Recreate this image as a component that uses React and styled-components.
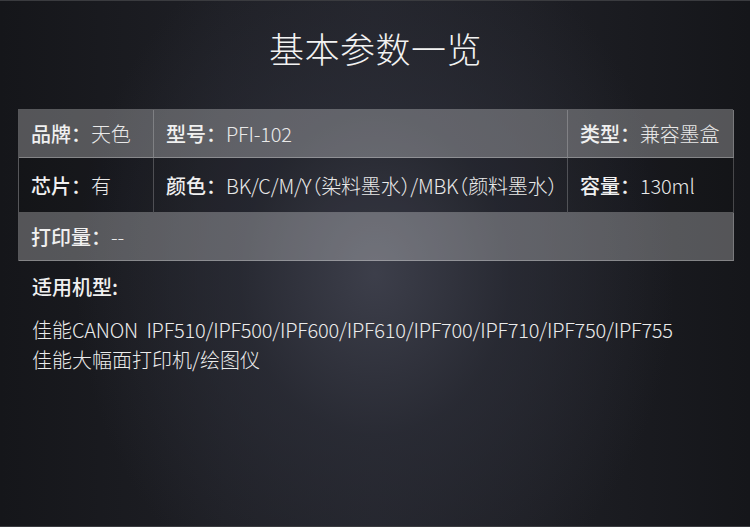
import React from "react";
import styled, { createGlobalStyle } from "styled-components";

const Global = createGlobalStyle`
  html, body { margin: 0; padding: 0; }
  body { background: #16171b; }
`;

const Page = styled.div`
  width: 750px;
  height: 527px;
  box-sizing: border-box;
  overflow: hidden;
  font-family: "Noto Sans CJK SC", "Noto Sans", sans-serif;
  color: #ececec;
  background:
    radial-gradient(ellipse 300px 360px at 50% 52%, rgba(62,64,76,0.95) 0%, rgba(44,46,56,0.7) 45%, rgba(22,23,27,0) 100%),
    linear-gradient(90deg, #15161a 0%, #1e1f25 30%, #22232a 50%, #1e1f25 70%, #15161a 100%);
  border-top: 1px solid #3a3b3f;
  border-bottom: 1px solid #3a3b3f;
  padding: 25px 17px 0 18px;
  display: flex;
  flex-direction: column;
`;

const Title = styled.h1`
  margin: 0;
  text-align: center;
  font-size: 35px;
  font-weight: 300;
  line-height: 44px;
  color: #f2f2f2;
  letter-spacing: 0.5px;
`;

const Table = styled.div`
  margin-top: 39px;
  display: grid;
  grid-template-columns: 135px 414px 166px;
  grid-template-rows: 48px 55px 48px;
  border: 1px solid rgba(255,255,255,0.28);
  border-right: none;
  border-bottom: none;
`;

const Cell = styled.div`
  display: flex;
  align-items: center;
  padding-left: 12px;
  font-size: 20px;
  font-weight: 300;
  white-space: nowrap;
  background: ${p => (p.$light ? "rgba(255,255,255,0.27)" : "rgba(0,0,0,0.08)")};
  border-right: 1px solid rgba(255,255,255,0.22);
  border-bottom: 1px solid rgba(255,255,255,0.28);
  grid-column: ${p => p.$span || "auto"};
  color: #e9e9e9;
`;

const Label = styled.span`
  font-weight: 500;
  color: #f0f0f0;
`;

const Value = styled.span`
  font-feature-settings: "halt";
  letter-spacing: -0.2px;
`;

const Section = styled.div`
  padding: 12px 0 0 14px;
`;

const Heading = styled.div`
  font-size: 20px;
  font-weight: 500;
  line-height: 28px;
  color: #f0f0f0;
`;

const Models = styled.p`
  margin: 14px 0 0;
  font-size: 20px;
  line-height: 30px;
  font-weight: 300;
  color: #ececec;
  white-space: nowrap;
`;

const Latin = styled.span`
  letter-spacing: -0.22px;
`;

function Item({ label, value }) {
  return (
    <>
      <Label>{label}：</Label>
      <Value>{value}</Value>
    </>
  );
}

export default function App() {
  return (
    <>
      <Global />
      <Page>
        <Title>基本参数一览</Title>
        <Table>
          <Cell $light><Item label="品牌" value="天色" /></Cell>
          <Cell $light><Item label="型号" value="PFI-102" /></Cell>
          <Cell $light><Item label="类型" value="兼容墨盒" /></Cell>
          <Cell><Item label="芯片" value="有" /></Cell>
          <Cell><Item label="颜色" value="BK/C/M/Y（染料墨水）/MBK（颜料墨水）" /></Cell>
          <Cell><Item label="容量" value="130ml" /></Cell>
          <Cell $light $span="1 / 4"><Item label="打印量" value="--" /></Cell>
        </Table>
        <Section>
          <Heading>适用机型:</Heading>
          <Models>
            佳能<Latin>CANON&nbsp; IPF510/IPF500/IPF600/IPF610/IPF700/IPF710/IPF750/IPF755</Latin>
            <br />
            佳能大幅面打印机/绘图仪
          </Models>
        </Section>
      </Page>
    </>
  );
}
